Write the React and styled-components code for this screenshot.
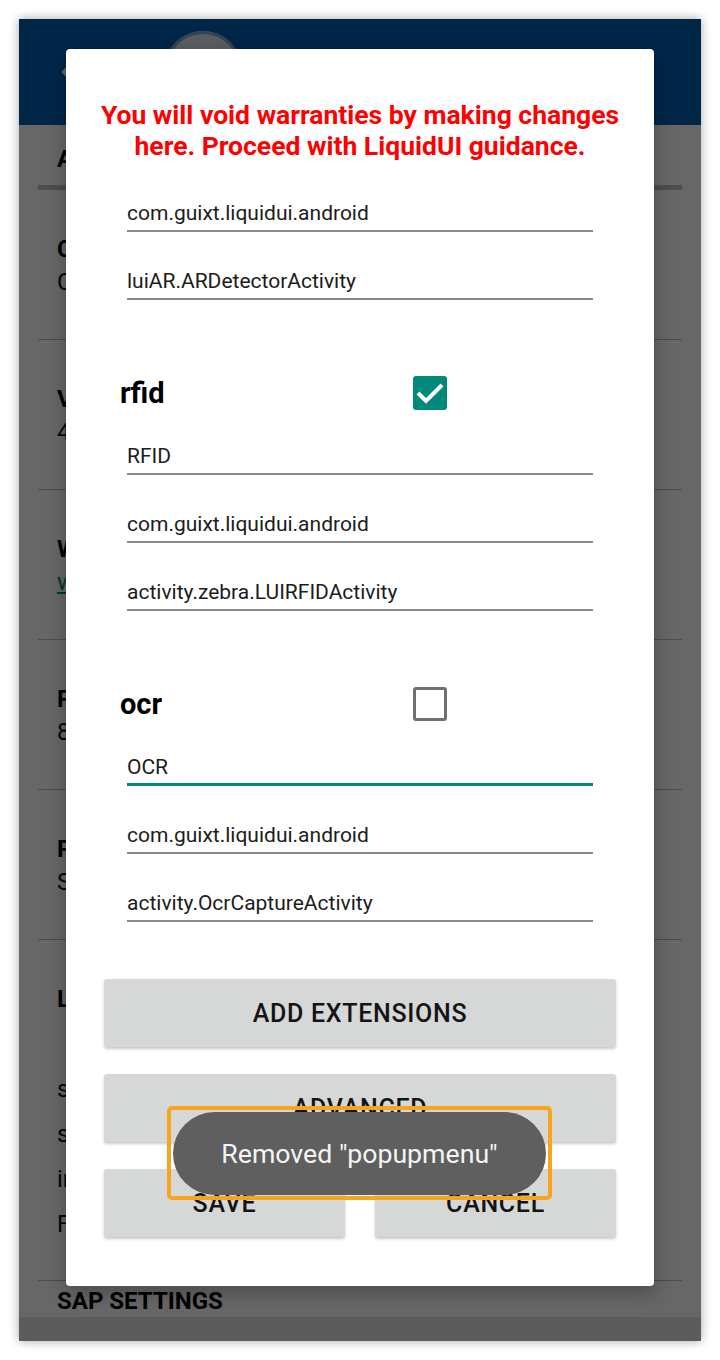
import React from "react";
import styled, { createGlobalStyle } from "styled-components";

const GlobalStyle = createGlobalStyle`
  html, body { margin: 0; padding: 0; background: #ffffff; }
  body {
    font-family: Roboto, "Noto Sans", "Liberation Sans", sans-serif;
    -webkit-font-smoothing: antialiased;
  }
  * { box-sizing: border-box; }
`;

const Page = styled.div`
  width: 720px;
  height: 1360px;
  padding: 19px;
  background: #ffffff;
`;

const Phone = styled.div`
  position: relative;
  width: 682px;
  height: 1322px;
  overflow: hidden;
  background: #ffffff;
  display: flex;
  flex-direction: column;
  box-shadow: 0 0 10px rgba(0, 0, 0, 0.35);
`;

/* ---------- settings screen underneath the dialog ---------- */

const AppBar = styled.header`
  flex: none;
  height: 106px;
  background: #005eb7;
  display: flex;
  align-items: center;
  padding-left: 38px;
  gap: 81px;
`;

const BackIcon = styled.svg`
  width: 26px;
  height: 26px;
  flex: none;
`;

const Logo = styled.div`
  width: 78px;
  height: 78px;
  border-radius: 50%;
  background: #e2e8ee;
  box-shadow: inset 0 0 0 3px #7fa8d0;
  margin-top: -4px;
`;

const Content = styled.main`
  flex: 1;
  overflow: hidden;
  padding: 0 19px;
`;

const TabRow = styled.div`
  height: 65px;
  padding: 8px 19px 0;
  display: flex;
  align-items: center;
  border-bottom: 5px solid #c2c2c2;
  font-size: 24px;
  font-weight: 700;
  color: #000;
`;

const Item = styled.section`
  padding: 44px 19px ${(p) => (p.$tall ? "33px" : "42px")};
  border-bottom: 1px solid #bcbcbc;
`;

const ItemTitle = styled.div`
  font-size: 24px;
  line-height: 30px;
  font-weight: 700;
  color: #000;
  white-space: nowrap;
`;

const ItemValue = styled.div`
  margin-top: 3px;
  font-size: 24px;
  line-height: 30px;
  color: ${(p) => (p.$link ? "#00897b" : "#111")};
  text-decoration: ${(p) => (p.$link ? "underline" : "none")};
  white-space: nowrap;
`;

const OptionList = styled.ul`
  list-style: none;
  margin: 53px 0 0;
  padding: 0;
`;

const Option = styled.li`
  font-size: 24px;
  line-height: 45px;
  color: #111;
  white-space: nowrap;
`;

const GroupHeading = styled.div`
  padding: 0 19px;
  font-size: 24px;
  line-height: 40px;
  font-weight: 700;
  color: #000;
`;

const BottomStrip = styled.div`
  flex: none;
  height: 24px;
  background: #e4e4e4;
`;

const Scrim = styled.div`
  position: absolute;
  inset: 0;
  background: rgba(0, 0, 0, 0.596);
  z-index: 1;
`;

/* ---------- extensions dialog ---------- */

const Dialog = styled.div`
  position: absolute;
  left: 47px;
  top: 30px;
  width: 588px;
  height: 1237px;
  z-index: 2;
  background: #ffffff;
  border-radius: 4px;
  box-shadow: 0 6px 20px rgba(0, 0, 0, 0.3);
  padding: 50px 0 49px;
  display: flex;
  flex-direction: column;
`;

const Warning = styled.p`
  margin: 0;
  text-align: center;
  color: #ff0000;
  font-size: 26.5px;
  line-height: 31px;
  font-weight: 700;
`;

const FieldGroup = styled.div`
  margin-top: ${(p) => p.$top}px;
  padding: 0 61px;
  display: flex;
  flex-direction: column;
  gap: 37px;
`;

const Field = styled.div`
  font-size: 21px;
  line-height: 24px;
  color: #1c1c1c;
  padding-bottom: ${(p) => (p.$focused ? "4px" : "5px")};
  border-bottom: ${(p) =>
    p.$focused ? "3px solid #00897b" : "2px solid #8a8a8a"};
  white-space: nowrap;
`;

const Section = styled.div`
  margin-top: 73px;
  display: flex;
  flex-direction: column;
`;

const SectionHeader = styled.div`
  height: 40px;
  padding-left: 54px;
  display: grid;
  grid-template-columns: 293px 34px;
  align-items: center;
`;

const SectionTitle = styled.span`
  font-size: 29px;
  line-height: 40px;
  font-weight: 700;
  color: #000;
`;

const CheckBox = styled.span`
  width: 34px;
  height: 34px;
  border-radius: 3px;
  display: flex;
  align-items: center;
  justify-content: center;
  background: ${(p) => (p.$checked ? "#00897b" : "transparent")};
  border: ${(p) => (p.$checked ? "none" : "3px solid #707070")};
`;

const ButtonStack = styled.div`
  margin-top: 57px;
  padding: 0 38px;
  display: flex;
  flex-direction: column;
  gap: 27px;
`;

const ButtonRow = styled.div`
  display: grid;
  grid-template-columns: 1fr 1fr;
  gap: 30px;
`;

const Button = styled.button`
  height: 68px;
  border: none;
  border-radius: 3px;
  background: #d6d7d7;
  box-shadow: 0 2px 3px rgba(0, 0, 0, 0.22);
  font-family: Roboto, "Noto Sans", sans-serif;
  font-size: 25px;
  font-weight: 500;
  letter-spacing: 0.7px;
  color: #141414;
  padding: 0;
`;

/* ---------- toast with its highlight outline ---------- */

const Highlight = styled.div`
  position: absolute;
  left: 148px;
  top: 1087px;
  width: 385px;
  height: 94px;
  z-index: 3;
  border: 4px solid #f8a51c;
  border-radius: 5px;
  padding: 2px 2px 1px;
`;

const Toast = styled.div`
  width: 100%;
  height: 100%;
  border-radius: 42px;
  background: #5f5f5f;
  display: flex;
  align-items: center;
  justify-content: center;
  color: #f4f4f4;
  font-size: 26.7px;
`;

const Check = () => (
  <svg width="34" height="34" viewBox="0 0 34 34">
    <polyline
      points="5,17 13,25 29,9"
      fill="none"
      stroke="#ffffff"
      strokeWidth="4"
    />
  </svg>
);

const Extension = ({ name, checked, fields, focusIndex }) => (
  <Section>
    <SectionHeader>
      <SectionTitle>{name}</SectionTitle>
      <CheckBox $checked={checked}>{checked && <Check />}</CheckBox>
    </SectionHeader>
    <FieldGroup $top={31}>
      {fields.map((f, i) => (
        <Field key={f} $focused={i === focusIndex}>
          {f}
        </Field>
      ))}
    </FieldGroup>
  </Section>
);

const items = [
  { title: "Company", value: "Copyright Synactive Inc." },
  { title: "Version", value: "4.2.5" },
  { title: "Website", value: "www.liquidui.com", link: true },
  { title: "Port", value: "8080" },
  { title: "Profile", value: "Standard" },
];

export default function App() {
  return (
    <Page>
      <GlobalStyle />
      <Phone>
        <AppBar>
          <BackIcon viewBox="0 0 24 24">
            <path
              d="M20 11H7.83l5.59-5.59L12 4l-8 8 8 8 1.41-1.41L7.83 13H20v-2z"
              fill="#ffffff"
            />
          </BackIcon>
          <Logo />
        </AppBar>
        <Content>
          <TabRow>ABOUT</TabRow>
          {items.map((it) => (
            <Item key={it.title}>
              <ItemTitle>{it.title}</ItemTitle>
              <ItemValue $link={it.link}>{it.value}</ItemValue>
            </Item>
          ))}
          <Item $tall>
            <ItemTitle>Logging</ItemTitle>
            <OptionList>
              <Option>sap connection</Option>
              <Option>scripts</Option>
              <Option>info</Option>
              <Option>Fatal errors</Option>
            </OptionList>
          </Item>
          <GroupHeading>SAP SETTINGS</GroupHeading>
        </Content>
        <BottomStrip />
        <Scrim />
        <Dialog>
          <Warning>
            You will void warranties by making changes
            <br />
            here. Proceed with LiquidUI guidance.
          </Warning>
          <FieldGroup $top={40}>
            <Field>com.guixt.liquidui.android</Field>
            <Field>luiAR.ARDetectorActivity</Field>
          </FieldGroup>
          <Extension
            name="rfid"
            checked
            fields={[
              "RFID",
              "com.guixt.liquidui.android",
              "activity.zebra.LUIRFIDActivity",
            ]}
          />
          <Extension
            name="ocr"
            checked={false}
            focusIndex={0}
            fields={[
              "OCR",
              "com.guixt.liquidui.android",
              "activity.OcrCaptureActivity",
            ]}
          />
          <ButtonStack>
            <Button>ADD EXTENSIONS</Button>
            <Button>ADVANCED</Button>
            <ButtonRow>
              <Button>SAVE</Button>
              <Button>CANCEL</Button>
            </ButtonRow>
          </ButtonStack>
        </Dialog>
        <Highlight>
          <Toast>Removed "popupmenu"</Toast>
        </Highlight>
      </Phone>
    </Page>
  );
}
